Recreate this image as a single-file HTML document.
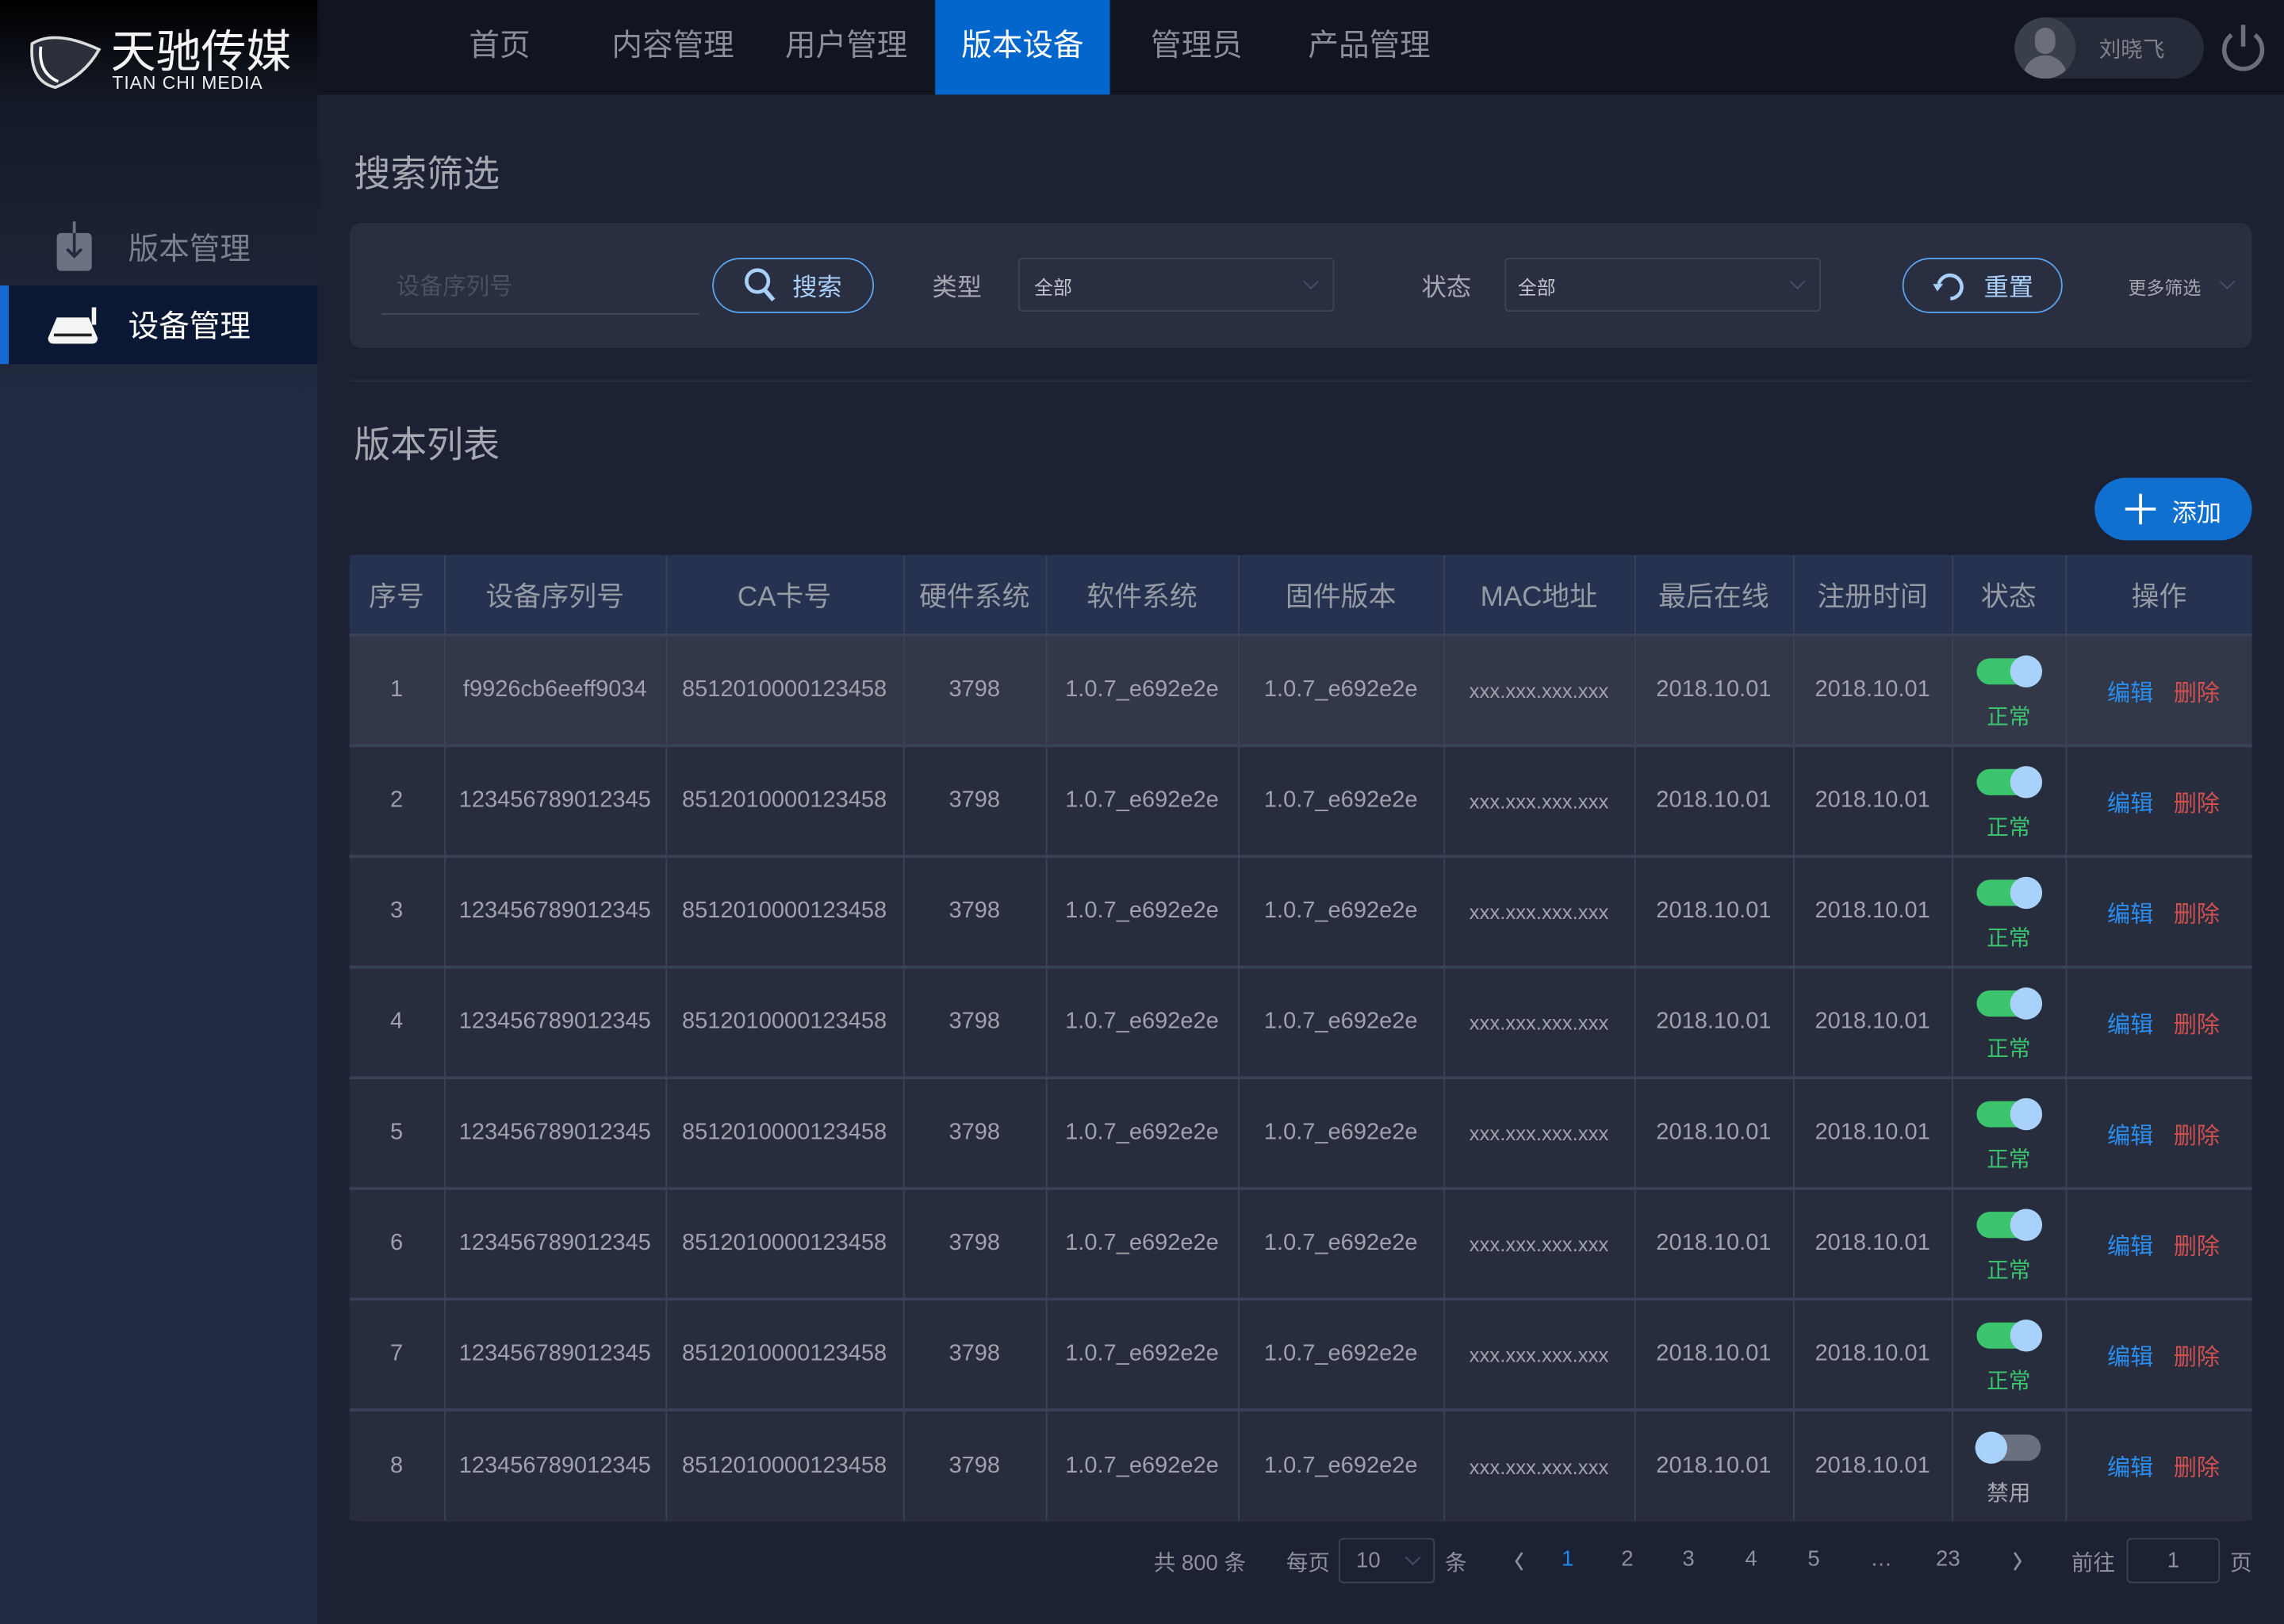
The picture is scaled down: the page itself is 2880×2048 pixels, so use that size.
<!DOCTYPE html>
<html><head><meta charset="utf-8"><style>
*{margin:0;padding:0;box-sizing:border-box}
html,body{width:2880px;height:2048px;overflow:hidden;background:#1c2133}
#r{position:absolute;left:0;top:0;width:1568px;height:1115px;transform:scale(1.83673);transform-origin:0 0;font-family:"Liberation Sans","Noto Sans CJK SC",sans-serif;color:#9a9ea8}
.a{position:absolute}
#side{left:0;top:0;width:218px;height:1115px;background:linear-gradient(#000 0,#141a27 70px,#232c44 300px,#222b42 100%)}
#top{left:218px;top:0;width:1350px;height:65px;background:#10151f}
.nav{top:0;height:65px;line-height:64px;font-size:21px;color:#8a8e98}
table{position:absolute;left:240px;top:381px;width:1306px;border-collapse:collapse;font-size:15.8px;color:#9ea2ac;table-layout:fixed}
th{height:55px;background:#273250;font-weight:normal;font-size:19px;color:#959aa5;border-left:1px solid #3a4358}
td{height:76px;text-align:center;border-left:1px solid #3a4358;border-top:2px solid #394258;background:#282d3e;white-space:nowrap}
tr.h td{background:#333849}
th:first-child,td:first-child{border-left:none}
.sw{display:inline-block;width:44px;height:18px;border-radius:9px;background:#3cc36e;position:relative;margin-top:6px}
.sw:after{content:"";position:absolute;right:-1px;top:-2px;width:22px;height:22px;border-radius:50%;background:#a8d2fb}
.sw.off{background:#6b7080}.sw.off:after{right:auto;left:-1px}
.st{color:#3cc36e;font-size:15px;display:block;margin-top:6px}
.ed{color:#2a8ef0;margin-right:14px}.de{color:#d05050}
.op{padding-left:6px}
.mac{font-size:14px}
.pg{top:1062px;font-size:15px;color:#8d919b}
</style></head><body><div id="r">
<div class="a" id="side"></div>
<svg class="a" style="left:18px;top:22px" width="56" height="40" viewBox="0 0 56 40"><path d="M4 8 Q20 -2 50 12 Q40 30 20 38 Q2 34 4 8Z" fill="#2a2f3a" stroke="#ddd" stroke-width="2"/><path d="M10 10 Q8 28 22 34" stroke="#fff" stroke-width="2" fill="none"/></svg>
<div class="a" style="left:76px;top:19px;font-size:31px;color:#f4f4f4;line-height:34px">天驰传媒</div>
<div class="a" style="left:77px;top:51px;font-size:12.5px;color:#eee;line-height:13px;letter-spacing:0.5px">TIAN CHI MEDIA</div>
<svg class="a" style="left:38px;top:152px" width="26" height="36" viewBox="0 0 26 36"><rect x="1" y="8" width="24" height="26" rx="3" fill="#6c7282"/><path d="M13 2 V24 M8 19 L13 24 L18 19" stroke="#222a3d" stroke-width="2" fill="none"/><path d="M13 0 V8" stroke="#6c7282" stroke-width="2"/></svg>
<div class="a" style="left:88px;top:155px;font-size:21px;color:#7c808c">版本管理</div>
<div class="a" style="left:0;top:196px;width:218px;height:54px;background:#0b1833;border-left:6px solid #1769d2"></div>
<svg class="a" style="left:31px;top:210px" width="38" height="28" viewBox="0 0 38 28"><path d="M8 8 H30 L36 22 Q36 26 32 26 H6 Q2 26 2 22Z" fill="#f4f4f4"/><rect x="6" y="19" width="26" height="2" fill="#222"/><rect x="32" y="1" width="3" height="12" fill="#f4f4f4"/></svg>
<div class="a" style="left:88px;top:208px;font-size:21px;color:#fff">设备管理</div>
<div class="a" id="top"></div>
<div class="a nav" style="left:322px">首页</div>
<div class="a nav" style="left:420px">内容管理</div>
<div class="a nav" style="left:539px">用户管理</div>
<div class="a nav" style="left:642px;width:120px;background:#0366cc;color:#fff;text-align:center">版本设备</div>
<div class="a nav" style="left:790px">管理员</div>
<div class="a nav" style="left:898px">产品管理</div>
<div class="a" style="left:1383px;top:12px;width:130px;height:42px;border-radius:21px;background:#262b39"></div>
<div class="a" style="left:1383px;top:12px;width:42px;height:42px;border-radius:21px;background:#3a3f4c;overflow:hidden"><div class="a" style="left:14px;top:7px;width:14px;height:18px;border-radius:7px;background:#6b6f7b"></div><div class="a" style="left:6px;top:26px;width:30px;height:20px;border-radius:15px 15px 0 0;background:#6b6f7b"></div></div>
<div class="a" style="left:1441px;top:23px;font-size:15px;color:#7e828d">刘晓飞</div>
<svg class="a" style="left:1522px;top:14px" width="36" height="36" viewBox="0 0 36 36"><path d="M10 10 A13 13 0 1 0 26 10" stroke="#6b6f7b" stroke-width="3" fill="none"/><path d="M18 3 V18" stroke="#6b6f7b" stroke-width="3"/></svg>
<div class="a" style="left:243px;top:100px;font-size:25px;color:#a5a8b0">搜索筛选</div>
<div class="a" style="left:240px;top:153px;width:1306px;height:86px;border-radius:8px;background:#292e40"></div>
<div class="a" style="left:262px;top:183px;width:218px;height:33px;border-bottom:1px solid #464c5e;font-size:16px;color:#4b5062;padding-left:10px">设备序列号</div>
<div class="a" style="left:489px;top:177px;width:111px;height:38px;border:1px solid #5aa2ea;border-radius:19px"></div>
<svg class="a" style="left:510px;top:183px" width="24" height="26" viewBox="0 0 24 26"><circle cx="10" cy="10" r="7.5" stroke="#a9d0f8" stroke-width="2.5" fill="none"/><path d="M15 16 L21 23" stroke="#a9d0f8" stroke-width="3"/></svg>
<div class="a" style="left:544px;top:183px;font-size:17px;color:#a9d0f8">搜索</div>
<div class="a" style="left:640px;top:183px;font-size:17px;color:#a5a8b0">类型</div>
<div class="a" style="left:699px;top:177px;width:217px;height:37px;border:1px solid #3e4456;border-radius:3px;font-size:13px;color:#c0c4cc;padding:9px 0 0 10px">全部</div>
<svg class="a" style="left:894px;top:192px" width="12" height="8"><path d="M1 1 L6 6 L11 1" stroke="#4a5064" fill="none"/></svg>
<div class="a" style="left:976px;top:183px;font-size:17px;color:#a5a8b0">状态</div>
<div class="a" style="left:1033px;top:177px;width:217px;height:37px;border:1px solid #3e4456;border-radius:3px;font-size:13px;color:#c0c4cc;padding:9px 0 0 8px">全部</div>
<svg class="a" style="left:1228px;top:192px" width="12" height="8"><path d="M1 1 L6 6 L11 1" stroke="#4a5064" fill="none"/></svg>
<div class="a" style="left:1306px;top:177px;width:110px;height:38px;border:1px solid #5aa2ea;border-radius:19px"></div>
<svg class="a" style="left:1325px;top:184px" width="26" height="26" viewBox="0 0 26 26"><path d="M6 11 A8 8 0 1 1 14 21" stroke="#a9d0f8" stroke-width="2.5" fill="none"/><path d="M2 11 L9 11 L5 16Z" fill="#a9d0f8"/></svg>
<div class="a" style="left:1362px;top:183px;font-size:17px;color:#a9d0f8">重置</div>
<div class="a" style="left:1461px;top:187px;font-size:12.5px;color:#a5a8b0">更多筛选</div>
<svg class="a" style="left:1523px;top:192px" width="12" height="8"><path d="M1 1 L6 6 L11 1" stroke="#4a5064" fill="none"/></svg>
<div class="a" style="left:240px;top:261px;width:1306px;height:1px;background:#282e40"></div>
<div class="a" style="left:243px;top:286px;font-size:25px;color:#a5a8b0">版本列表</div>
<div class="a" style="left:1438px;top:328px;width:108px;height:43px;border-radius:22px;background:#1070d0"></div>
<svg class="a" style="left:1458px;top:338px" width="23" height="23"><path d="M11.5 1 V22 M1 11.5 H22" stroke="#fff" stroke-width="2"/></svg>
<div class="a" style="left:1491px;top:338px;font-size:17px;color:#fff">添加</div>
<div class="a" style="left:240px;top:381px;width:1306px;height:664px;border-radius:8px;overflow:hidden;background:#282d3e"></div>
<table>
<colgroup><col style="width:65px"><col style="width:152px"><col style="width:163px"><col style="width:98px"><col style="width:132px"><col style="width:141px"><col style="width:131px"><col style="width:109px"><col style="width:109px"><col style="width:78px"><col style="width:128px"></colgroup>
<tr><th>序号</th><th>设备序列号</th><th>CA卡号</th><th>硬件系统</th><th>软件系统</th><th>固件版本</th><th>MAC地址</th><th>最后在线</th><th>注册时间</th><th>状态</th><th>操作</th></tr>
<tr class="h"><td>1</td><td>f9926cb6eeff9034</td><td>8512010000123458</td><td>3798</td><td>1.0.7_e692e2e</td><td>1.0.7_e692e2e</td><td class="mac">xxx.xxx.xxx.xxx</td><td>2018.10.01</td><td>2018.10.01</td><td><span class="sw"></span><span class="st">正常</span></td><td class="op"><span class="ed">编辑</span><span class="de">删除</span></td></tr>
<tr><td>2</td><td>123456789012345</td><td>8512010000123458</td><td>3798</td><td>1.0.7_e692e2e</td><td>1.0.7_e692e2e</td><td class="mac">xxx.xxx.xxx.xxx</td><td>2018.10.01</td><td>2018.10.01</td><td><span class="sw"></span><span class="st">正常</span></td><td class="op"><span class="ed">编辑</span><span class="de">删除</span></td></tr>
<tr><td>3</td><td>123456789012345</td><td>8512010000123458</td><td>3798</td><td>1.0.7_e692e2e</td><td>1.0.7_e692e2e</td><td class="mac">xxx.xxx.xxx.xxx</td><td>2018.10.01</td><td>2018.10.01</td><td><span class="sw"></span><span class="st">正常</span></td><td class="op"><span class="ed">编辑</span><span class="de">删除</span></td></tr>
<tr><td>4</td><td>123456789012345</td><td>8512010000123458</td><td>3798</td><td>1.0.7_e692e2e</td><td>1.0.7_e692e2e</td><td class="mac">xxx.xxx.xxx.xxx</td><td>2018.10.01</td><td>2018.10.01</td><td><span class="sw"></span><span class="st">正常</span></td><td class="op"><span class="ed">编辑</span><span class="de">删除</span></td></tr>
<tr><td>5</td><td>123456789012345</td><td>8512010000123458</td><td>3798</td><td>1.0.7_e692e2e</td><td>1.0.7_e692e2e</td><td class="mac">xxx.xxx.xxx.xxx</td><td>2018.10.01</td><td>2018.10.01</td><td><span class="sw"></span><span class="st">正常</span></td><td class="op"><span class="ed">编辑</span><span class="de">删除</span></td></tr>
<tr><td>6</td><td>123456789012345</td><td>8512010000123458</td><td>3798</td><td>1.0.7_e692e2e</td><td>1.0.7_e692e2e</td><td class="mac">xxx.xxx.xxx.xxx</td><td>2018.10.01</td><td>2018.10.01</td><td><span class="sw"></span><span class="st">正常</span></td><td class="op"><span class="ed">编辑</span><span class="de">删除</span></td></tr>
<tr><td>7</td><td>123456789012345</td><td>8512010000123458</td><td>3798</td><td>1.0.7_e692e2e</td><td>1.0.7_e692e2e</td><td class="mac">xxx.xxx.xxx.xxx</td><td>2018.10.01</td><td>2018.10.01</td><td><span class="sw"></span><span class="st">正常</span></td><td class="op"><span class="ed">编辑</span><span class="de">删除</span></td></tr>
<tr><td>8</td><td>123456789012345</td><td>8512010000123458</td><td>3798</td><td>1.0.7_e692e2e</td><td>1.0.7_e692e2e</td><td class="mac">xxx.xxx.xxx.xxx</td><td>2018.10.01</td><td>2018.10.01</td><td><span class="sw off"></span><span class="st" style="color:#a5a8b0">禁用</span></td><td class="op"><span class="ed">编辑</span><span class="de">删除</span></td></tr>
</table>
<div class="a pg" style="left:792px">共 800 条</div>
<div class="a pg" style="left:883px">每页</div>
<div class="a" style="left:919px;top:1056px;width:66px;height:31px;border:1px solid #3e4456;border-radius:3px;font-size:15px;color:#8d919b;padding:6px 0 0 11px">10</div>
<svg class="a" style="left:964px;top:1068px" width="12" height="8"><path d="M1 1 L6 6 L11 1" stroke="#4a5064" fill="none"/></svg>
<div class="a pg" style="left:992px">条</div>
<svg class="a" style="left:1039px;top:1065px" width="8" height="14"><path d="M6 1 L2 7 L6 13" stroke="#8d919b" stroke-width="1.5" fill="none"/></svg>
<div class="a pg" style="left:1072px;color:#1f86ee">1</div>
<div class="a pg" style="left:1113px">2</div>
<div class="a pg" style="left:1155px">3</div>
<div class="a pg" style="left:1198px">4</div>
<div class="a pg" style="left:1241px">5</div>
<div class="a pg" style="left:1284px">…</div>
<div class="a pg" style="left:1329px">23</div>
<svg class="a" style="left:1381px;top:1065px" width="8" height="14"><path d="M2 1 L6 7 L2 13" stroke="#8d919b" stroke-width="1.5" fill="none"/></svg>
<div class="a pg" style="left:1422px">前往</div>
<div class="a" style="left:1460px;top:1056px;width:64px;height:31px;border:1px solid #3e4456;border-radius:3px;font-size:15px;color:#8d919b;text-align:center;padding-top:6px">1</div>
<div class="a pg" style="left:1531px">页</div>
</div></body></html>
